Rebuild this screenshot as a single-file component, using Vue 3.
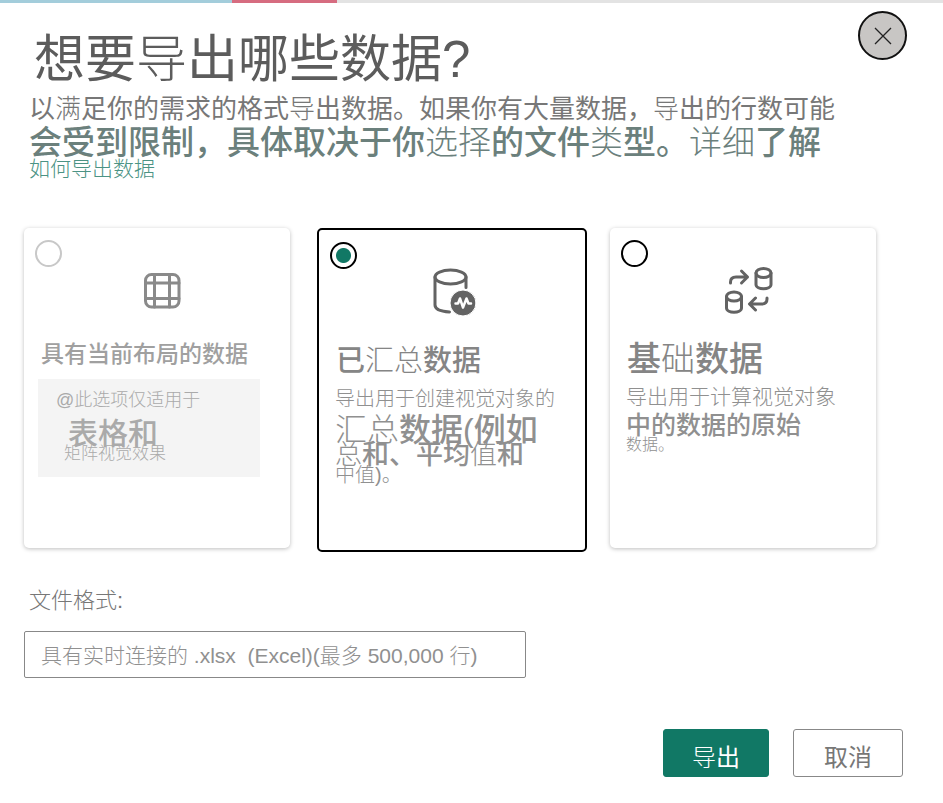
<template>
  <div class="page">
    <div class="strip"><i class="strip-blue"></i><i class="strip-pink"></i></div>

    <main class="dialog">
      <button class="close" type="button" aria-label="关闭">
        <svg width="18" height="18" viewBox="0 0 18 18"><path d="M1 1l16 16M17 1L1 17" /></svg>
      </button>

      <header class="head">
        <h1 class="title">想要<span class="thin">导</span>出哪些数据?</h1>
        <p class="intro">以<span class="thin">满</span>足你的需求的格式<span class="thin">导</span>出数据。如果你有大量数据，<span class="thin">导</span>出的行数可能</p>
        <p class="intro-strong">会受到限制，具体取决于你<span class="thin">选择</span>的文件<span class="thin">类</span>型。<span class="thin">详细</span>了解</p>
        <a class="link" href="#">如何导出数据</a>
      </header>

      <form @submit.prevent>
        <div class="cards">
          <label v-for="o in options" :key="o.id" class="card" :class="{ selected: picked === o.id, disabled: o.disabled }">
            <input v-model="picked" class="radio" type="radio" name="kind" :value="o.id" :disabled="o.disabled" />

            <svg v-if="o.id === 'layout'" class="icon" viewBox="0 0 48 48">
              <rect x="7.5" y="7.5" width="33.5" height="32.5" rx="6" />
              <path d="M16.5 7.5V40M31.5 7.5V40M7.5 16H41M7.5 31.5H41" />
            </svg>
            <svg v-else-if="o.id === 'summary'" class="icon" viewBox="0 0 48 48">
              <ellipse cx="17.5" cy="8" rx="15.5" ry="7" />
              <path d="M2 8v28c0 4 6 6.5 14.5 7M33 8v10.5" />
              <circle class="solid" cx="30" cy="34" r="13" />
              <path class="pulse" d="M22.5 34.5h2.5l2-5 3 9 3.5-9 2 5H38" />
            </svg>
            <svg v-else class="icon" viewBox="0 0 48 48">
              <ellipse cx="39.5" cy="6" rx="7.5" ry="4.5" />
              <path d="M32 6v11.5c0 5.5 15 5.5 15 0V6" />
              <ellipse cx="10" cy="29.5" rx="7.5" ry="4.5" />
              <path d="M2.5 29.5V41c0 5.5 15 5.5 15 0V29.5" />
              <path d="M6.5 16v-1c0-3.5 2-5 5.5-5H23.5M17.5 4l6 6-6 6" />
              <path d="M43 31v1c0 3.5-2 5-5.5 5H26M31.5 31l-6 6 6 6" />
            </svg>

            <span class="card-title" :class="o.titleSize">
              <span v-for="(r, i) in runs(o.title)" :key="i" :class="{ thin: r.thin }">{{ r.text }}</span>
            </span>
            <span class="desc">
              <span v-for="l in o.lines" :key="l.text" class="line" :class="l.size">
                <span v-for="(r, i) in runs(l.text)" :key="i" :class="{ thin: r.thin }">{{ r.text }}</span>
              </span>
            </span>
          </label>
        </div>

        <div class="format">
          <label class="format-label" for="format">文件格式:</label>
          <select id="format" v-model="format" class="format-select">
            <option value="xlsx">具有实时连接的 .xlsx&nbsp; (Excel)(最多 500,000 行)</option>
          </select>
        </div>

        <div class="actions">
          <button class="btn btn-primary" type="submit"><span class="thin">导</span>出</button>
          <button class="btn" type="button">取消</button>
        </div>
      </form>
    </main>
  </div>
</template>

<script setup>
import { ref } from "vue";

const picked = ref("summary");
const format = ref("xlsx");

// characters set in the light weight inside heavier lines
const runs = (text) => text.split(/([汇总础值]+)/).filter(Boolean).map((t) => ({ text: t, thin: /[汇总础值]/.test(t) }));

const options = [
  {
    id: "layout", title: "具有当前布局的数据", titleSize: "title-sm", disabled: true,
    lines: [
      { text: "@此选项仅适用于", size: "note-first" },
      { text: "表格和", size: "note-big" },
      { text: "矩阵视觉效果", size: "note-small" }
    ]
  },
  {
    id: "summary", title: "已汇总数据", titleSize: "title-md",
    lines: [
      { text: "导出用于创建视觉对象的", size: "line-md" },
      { text: "汇总数据(例如", size: "line-xl" },
      { text: "总和、平均值和", size: "line-lg" },
      { text: "中值)。", size: "line-end" }
    ]
  },
  {
    id: "raw", title: "基础数据", titleSize: "title-lg",
    lines: [
      { text: "导出用于计算视觉对象", size: "line-first" },
      { text: "中的数据的原始", size: "line-mid" },
      { text: "数据。", size: "line-sm" }
    ]
  }
];
</script>

<style>
body { margin: 0; background: #fff; }
</style>

<style scoped>
.page { font-family: "Liberation Sans", "Noto Sans CJK SC", sans-serif; color: #777; }
.page * { box-sizing: border-box; }
.thin { font-weight: 300; }

.strip { display: flex; height: 3px; background: #e3e3e3; }
.strip-blue { width: 24.6%; background: #a3cddb; }
.strip-pink { width: 11.1%; background: #d66c80; }

.dialog { position: relative; padding: 25px 40px 24px 24px; }

.close {
  position: absolute; top: 8px; right: 36px; width: 49px; height: 49px; padding: 0;
  display: flex; align-items: center; justify-content: center;
  border: 2px solid #111; border-radius: 50%; background: #c8c6c4; cursor: pointer;
}
.close svg { fill: none; stroke: #222; stroke-width: 1.3; }

.head { padding-left: 5px; white-space: nowrap; }
.title { margin: 0; padding-left: 5px; font-size: 51px; line-height: 64px; font-weight: 400; color: #5c5c5c; }
.intro { margin: 0; font-size: 26px; line-height: 34px; color: #777; }
.intro-strong { margin: 0; font-size: 33px; line-height: 33px; font-weight: 500; color: #6b807c; }
.link { display: block; font-size: 21px; line-height: 19px; font-weight: 300; color: #4b9384; text-decoration: none; }

.cards { display: grid; grid-template-columns: repeat(3, minmax(0, 1fr)); gap: 27px; margin: 50px 27px 0 0; }
.card {
  box-sizing: content-box !important; width: 100%; min-height: 320px; position: relative;
  display: flex; flex-direction: column; align-self: start; border-radius: 5px; white-space: nowrap;
  background: #fff; box-shadow: 0 1px 4px rgba(0, 0, 0, 0.26); cursor: pointer;
}
.card.selected { border: 2px solid #000; box-shadow: none; }
.card.disabled { cursor: default; }

.radio {
  position: absolute; top: 12px; left: 11px; width: 27px; height: 27px; margin: 0;
  appearance: none; border: 2px solid #000; border-radius: 50%; background: #fff;
}
.radio:checked { background: radial-gradient(circle, #117865 7px, #fff 8px); }
.radio:disabled { border-color: #c8c8c8; }

.icon {
  width: 48px; height: 48px; margin: 39px 0 23px 10px; align-self: center; overflow: visible;
  fill: none; stroke: #636363; stroke-width: 3; stroke-linecap: round; stroke-linejoin: round;
}
.disabled .icon { stroke: #8a8a8a; }
.icon .solid { fill: #636363; stroke: #fff; stroke-width: 1; }
.icon .pulse { stroke: #fff; stroke-width: 2.5; }

.card-title { display: flex; padding-left: 17px; line-height: 42px; font-weight: 500; color: #858585; }
.title-sm { font-size: 23px; line-height: 32px; color: #a0a0a0; }
.title-md { font-size: 29px; }
.title-lg { font-size: 34px; }

.desc { display: block; padding-left: 16px; color: #909090; font-weight: 300; }
.line { display: flex; }
.line-md { font-size: 20px; line-height: 34px; }
.line-xl { font-size: 32px; line-height: 28px; font-weight: 500; }
.line-lg { font-size: 27px; line-height: 22px; font-weight: 500; }
.line-end { font-size: 20px; line-height: 18px; }
.line-first { font-size: 21px; line-height: 34px; }
.line-mid { font-size: 25px; line-height: 22px; font-weight: 500; }
.line-sm { font-size: 16px; line-height: 18px; }

.disabled .desc { margin: 9px 30px 0 14px; padding: 0 0 16px 18px; background: #f4f4f4; color: #aaa; }
.note-first { font-size: 18px; line-height: 42px; }
.note-big { padding-left: 12px; font-size: 30px; line-height: 26px; font-weight: 500; }
.note-small { padding-left: 8px; font-size: 17px; line-height: 14px; }

.format { margin-top: 33px; }
.format-label { display: block; margin-bottom: 14px; padding-left: 5px; font-size: 22px; line-height: 32px; font-weight: 300; color: #777; }
.format-select {
  display: block; width: 100%; max-width: 502px; height: 47px; padding: 2px 16px 0;
  appearance: none; border: 1px solid #888; border-radius: 2px; background: #fff;
  font-family: inherit; font-size: 21px; font-weight: 300; color: #909090;
}

.actions { display: flex; justify-content: flex-end; gap: 24px; margin-top: 51px; }
.btn {
  width: 110px; height: 48px; padding: 4px 0 0; border: 1px solid #888; border-radius: 3px;
  background: #fff; color: #777; font-family: inherit; font-size: 24px; cursor: pointer;
}
.btn-primary { width: 106px; border-color: #117865; background: #117865; color: #fff; }
</style>
